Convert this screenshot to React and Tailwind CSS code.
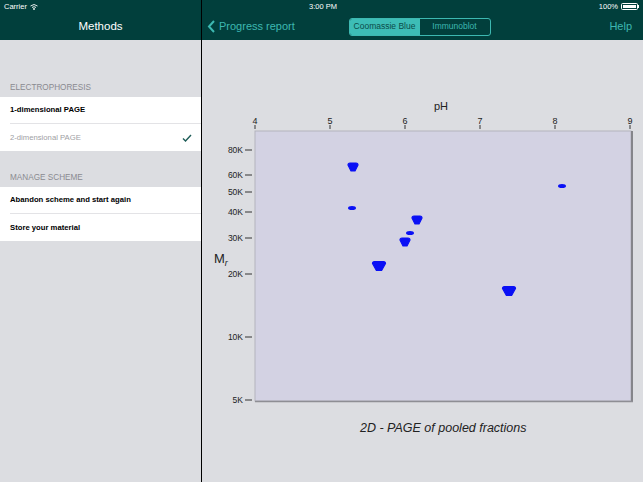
import React from 'react';

const spots = [
  { x: 151, y: 127, w: 10, h: 8, big: true },
  { x: 150, y: 168, w: 8, h: 4 },
  { x: 215, y: 180, w: 10, h: 8, big: true },
  { x: 208, y: 193, w: 8, h: 4 },
  { x: 203, y: 202, w: 10, h: 8, big: true },
  { x: 177, y: 226, w: 13, h: 9, big: true },
  { x: 307, y: 251, w: 13, h: 9, big: true },
  { x: 360, y: 146, w: 8, h: 4 },
];

const yTicks = [
  ['80K', 110], ['60K', 135], ['50K', 152], ['40K', 172],
  ['30K', 198], ['20K', 234], ['10K', 297], ['5K', 360],
];

function Spot({ x, y, w, h, big }) {
  if (!big) return <ellipse cx={x} cy={y} rx={w / 2} ry={h / 2} fill="#0a10f5" />;
  const a = w / 2, b = h / 2;
  const d = `M${x - a},${y - b + 2} Q${x - a},${y - b} ${x - a + 2},${y - b} L${x + a - 2},${y - b} Q${x + a},${y - b} ${x + a},${y - b + 2} L${x + a * 0.4},${y + b} L${x - a * 0.4},${y + b} Z`;
  return <path d={d} fill="#0a10f5" stroke="#0a10f5" strokeWidth="1.2" strokeLinejoin="round" />;
}

function Chart() {
  return (
    <svg width="441" height="370" className="block" style={{ fontFamily: '"Liberation Sans", Arial, sans-serif' }}>
      <text x="239" y="70" fontSize="11" fill="#222" textAnchor="middle">pH</text>
      {[4, 5, 6, 7, 8, 9].map((v, i) => (
        <g key={v}>
          <text x={53 + i * 75} y="84" fontSize="9" fill="#222" textAnchor="middle">{v}</text>
          <line x1={53 + i * 75} y1="85" x2={53 + i * 75} y2="89" stroke="#333" strokeWidth="1" />
        </g>
      ))}
      <rect x="53" y="91" width="376" height="270" fill="#d3d2e3" stroke="#b3b3bd" strokeWidth="1" />
      <line x1="430" y1="91" x2="430" y2="362" stroke="#85858a" strokeWidth="2" />
      <line x1="53" y1="361.5" x2="431" y2="361.5" stroke="#8e8e94" strokeWidth="1.5" />
      {yTicks.map(([l, y]) => (
        <g key={l}>
          <text x="41" y={y + 3} fontSize="8.5" fill="#222" textAnchor="end">{l}</text>
          <line x1="43" y1={y} x2="50" y2={y} stroke="#333" strokeWidth="1" />
        </g>
      ))}
      <text x="12" y="223" fontSize="13" fill="#222">M<tspan fontSize="9" fontStyle="italic" dy="3">r</tspan></text>
      {spots.map((s, i) => <Spot key={i} {...s} />)}
    </svg>
  );
}

export default function App() {
  return (
    <div className="flex w-[643px] h-[482px] overflow-hidden bg-[#dcdde1] text-black" style={{ fontFamily: '"Liberation Sans", Arial, sans-serif' }}>
      {/* left column */}
      <div className="w-[201px] flex flex-col bg-[#dcdde1]">
        <div className="h-[40px] bg-[#013f3c] flex flex-col">
          <div className="h-[13px] flex items-center pl-[4px] text-[7.5px] text-white gap-[3px]">
            <span>Carrier</span>
            <svg width="8" height="6" viewBox="0 0 8 6">
              <path d="M0.5,2 Q4,-1 7.5,2" stroke="#fff" strokeWidth="0.9" fill="none" />
              <path d="M2,3.5 Q4,1.8 6,3.5" stroke="#fff" strokeWidth="0.9" fill="none" />
              <circle cx="4" cy="5" r="0.9" fill="#fff" />
            </svg>
          </div>
          <div className="flex-1 flex items-center justify-center text-white text-[11.5px] font-medium">Methods</div>
        </div>
        <div className="h-[57px] flex items-end pb-[3px] pl-[10px] text-[8.2px] leading-[12px] text-[#8a8a90]">ELECTROPHORESIS</div>
        <div className="bg-white">
          <div className="h-[27px] flex items-center text-[7.7px] font-bold border-b border-[#e3e3e6] ml-[10px]">1-dimensional PAGE</div>
          <div className="h-[27px] flex items-center pl-[10px] pr-[9px] text-[7.7px] text-[#a0a0a4] justify-between">
            <span>2-dimensional PAGE</span>
            <svg width="10" height="8" viewBox="0 0 10 8"><path d="M1,4.5 L3.5,7 L9,1" stroke="#1d5c57" strokeWidth="1.4" fill="none" /></svg>
          </div>
        </div>
        <div className="h-[36px] flex items-end pb-[3px] pl-[10px] text-[8.2px] leading-[12px] text-[#8a8a90]">MANAGE SCHEME</div>
        <div className="bg-white">
          <div className="h-[27px] flex items-center text-[7.7px] font-bold border-b border-[#e3e3e6] ml-[10px]">Abandon scheme and start again</div>
          <div className="h-[27px] flex items-center pl-[10px] text-[7.7px] font-bold">Store your material</div>
        </div>
      </div>

      <div className="w-[1px] bg-black" />

      {/* right column */}
      <div className="flex-1 flex flex-col">
        <div className="h-[40px] bg-[#013f3c] flex flex-col">
          <div className="h-[13px] flex items-center text-[7.5px] text-white pr-[4px]">
            <span className="ml-[107px]">3:00 PM</span>
            <span className="ml-auto mr-[3px]">100%</span>
            <div className="flex items-center">
              <div className="w-[17px] h-[7px] border border-white rounded-[1.5px] p-[1px]"><div className="w-full h-full bg-white" /></div>
              <div className="w-[1px] h-[3px] bg-white" />
            </div>
          </div>
          <div className="flex-1 flex items-center">
            <div className="flex-1 flex items-center pl-[5px] text-[#3db8b1] text-[11px] gap-[3px]">
              <svg width="9" height="13" viewBox="0 0 9 13"><path d="M7,1 L2,6.5 L7,12" stroke="#3db8b1" strokeWidth="2" fill="none" /></svg>
              <span>Progress report</span>
            </div>
            <div className="flex w-[142px] h-[18px] border border-[#3db8b1] rounded-[3px] overflow-hidden text-[8.5px]">
              <div className="flex-1 bg-[#3dbdb6] text-[#0b4c49] flex items-center justify-center">Coomassie Blue</div>
              <div className="flex-1 text-[#3db8b1] flex items-center justify-center">Immunoblot</div>
            </div>
            <div className="flex-1 flex justify-end pr-[11px] text-[#3db8b1] text-[11px]">Help</div>
          </div>
        </div>
        <Chart />
        <div className="pl-[158px] mt-[9px] italic text-[12.5px] text-[#222]">2D - PAGE of pooled fractions</div>
      </div>
    </div>
  );
}
